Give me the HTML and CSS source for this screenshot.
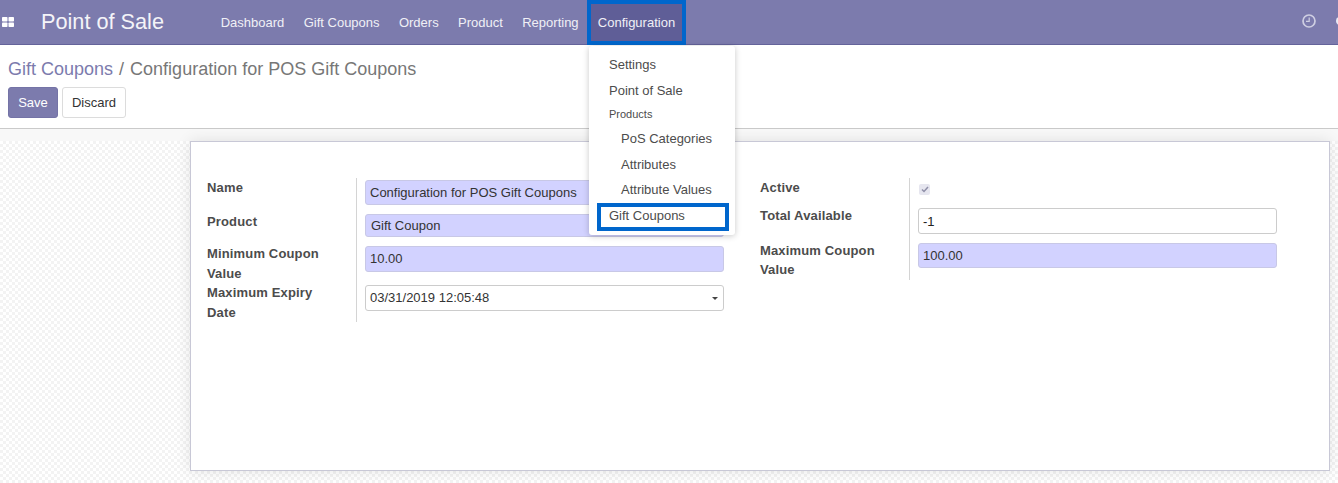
FILE: index.html
```html
<!DOCTYPE html>
<html lang="en">
<head>
    <meta charset="UTF-8">
    <meta name="viewport" content="width=device-width, initial-scale=1.0">
    <title>Point of Sale</title>
    <link rel="stylesheet" href="styles.css">
</head>
<body>

<nav class="navbar">
    <svg class="apps-icon" width="12" height="10" viewBox="0 0 12 10">
        <rect x="0" y="0" width="5.5" height="4.5" rx="0.8"/>
        <rect x="6.5" y="0" width="5.5" height="4.5" rx="0.8"/>
        <rect x="0" y="5.5" width="5.5" height="4.5" rx="0.8"/>
        <rect x="6.5" y="5.5" width="5.5" height="4.5" rx="0.8"/>
    </svg>
    <span class="brand">Point of Sale</span>
    <ul class="nav-menu">
        <li>Dashboard</li>
        <li>Gift Coupons</li>
        <li>Orders</li>
        <li>Product</li>
        <li>Reporting</li>
        <li class="nav-open">Configuration</li>
    </ul>
    <div class="nav-right">
        <svg class="clock-icon" width="14" height="14" viewBox="0 0 14 14">
            <circle cx="7" cy="7" r="6" fill="none" stroke="#cfcfe2" stroke-width="1.7"/>
            <path d="M7.2 3.4V7.4H4" fill="none" stroke="#cfcfe2" stroke-width="1.2"/>
        </svg>
        <span class="user-dot"></span>
    </div>
</nav>

<ul class="dropdown">
    <li>Settings</li>
    <li>Point of Sale</li>
    <li class="dropdown-head">Products</li>
    <li class="sub">PoS Categories</li>
    <li class="sub">Attributes</li>
    <li class="sub">Attribute Values</li>
    <li class="marked">Gift Coupons</li>
</ul>

<header class="control-panel">
    <h2 class="breadcrumb"><a>Gift Coupons</a> <span class="sep">/</span> Configuration for POS Gift Coupons</h2>
    <div class="buttons">
        <button class="btn-primary">Save</button>
        <button class="btn-default">Discard</button>
    </div>
</header>

<main class="content">
    <section class="sheet">
        <div class="group">
            <div class="row row-name">
                <label>Name</label>
                <div class="field"><div class="input required h25">Configuration for POS Gift Coupons</div></div>
            </div>
            <div class="row row-product">
                <label>Product</label>
                <div class="field"><div class="input required h23 pad-6">Gift Coupon</div></div>
            </div>
            <div class="row row-min">
                <label>Minimum Coupon Value</label>
                <div class="field"><div class="input required h26 lift">10.00</div></div>
            </div>
            <div class="row row-expiry">
                <label>Maximum Expiry Date</label>
                <div class="field">
                    <div class="input h26 lift">03/31/2019 12:05:48<span class="caret"></span></div>
                </div>
            </div>
        </div>
        <div class="group">
            <div class="row row-active">
                <label>Active</label>
                <div class="field"><span class="checkbox">
                    <svg width="8" height="7" viewBox="0 0 8 7"><path d="M1 3.5L3 5.5L7 1" fill="none" stroke="#8f8fa8" stroke-width="1.5"/></svg>
                </span></div>
            </div>
            <div class="row row-total">
                <label>Total Available</label>
                <div class="field"><div class="input h26 dark">-1</div></div>
            </div>
            <div class="row row-max">
                <label>Maximum Coupon Value</label>
                <div class="field"><div class="input required h25">100.00</div></div>
            </div>
        </div>
    </section>
</main>

</body>
</html>
```

FILE: styles.css
```css
* {
    margin: 0;
    padding: 0;
    box-sizing: border-box;
}
body {
    font-family: "Liberation Sans", Arial, sans-serif;
    font-size: 13px;
    color: #4c4c4c;
    height: 483px;
    overflow: hidden;
    background: #fff;
    position: relative;
}
ul {
    list-style: none;
}

/* top bar */
.navbar {
    height: 45px;
    background: #7c7bad;
    border-bottom: 1px solid #64639a;
    display: flex;
    align-items: center;
    color: #fff;
}
.apps-icon {
    fill: #fff;
    margin-left: 2px;
}
.brand {
    font-size: 21.7px;
    margin-left: 27px;
    width: 170px;
    color: #f4f4f8;
}
.nav-menu {
    display: flex;
    height: 44px;
}
.nav-menu li {
    padding: 0 9.7px;
    line-height: 46px;
    color: #f0f0f6;
}
.nav-menu .nav-open {
    background: #5f5e97;
    outline: 4px solid #0066cc;
    outline-offset: -4px;
    margin-left: -1px;
    padding: 0 10.5px;
    height: 45px;
}
.nav-right {
    margin-left: auto;
    display: flex;
    align-items: center;
    gap: 20px;
}
.clock-icon {
    margin-top: -2px;
}
.user-dot {
    width: 8px;
    height: 8px;
    border-radius: 50%;
    background: #e9e9f3;
    margin-right: -6px;
    margin-top: -3px;
}

/* configuration dropdown */
.dropdown {
    position: absolute;
    left: 589px;
    top: 46px;
    width: 146px;
    height: 189px;
    background: #fff;
    border-radius: 3px;
    box-shadow: 0 1px 6px rgba(0, 0, 0, 0.22);
    padding-top: 6px;
    z-index: 5;
}
.dropdown li {
    height: 26px;
    line-height: 25px;
    padding-left: 20px;
}
.dropdown .dropdown-head {
    font-size: 11px;
    height: 22px;
    line-height: 20px;
}
.dropdown .sub {
    padding-left: 32px;
    height: 25.5px;
}
.dropdown .marked {
    position: absolute;
    left: 8px;
    top: 157px;
    width: 132px;
    height: 28px;
    line-height: 18px;
    padding-left: 8px;
    border: 4px solid #0066cc;
}

/* title + buttons */
.control-panel {
    height: 84px;
    border-bottom: 1px solid #cacaca;
    padding: 12px 8px 0;
}
.breadcrumb {
    font-size: 18px;
    font-weight: 400;
    line-height: 24px;
    color: #777;
}
.breadcrumb a {
    color: #7c7bad;
}
.sep {
    padding: 0 1px;
}
.buttons {
    display: flex;
    gap: 4px;
    margin-top: 6px;
}
.buttons button {
    height: 31px;
    font: inherit;
    border-radius: 3px;
}
.btn-primary {
    width: 50px;
    background: #7c7bad;
    border: 1px solid #7473a6;
    color: #fff;
}
.btn-default {
    width: 64px;
    background: #fff;
    border: 1px solid #dcdcdc;
    color: #333;
}

/* form */
.content {
    height: 354px;
    padding: 12px 8px 0 190px;
    background-color: #fff;
    background-image: conic-gradient(#f3f3f3 25%, #fff 0 50%, #f3f3f3 0 75%, #fff 0);
    background-size: 6px 6px;
    position: relative;
}
.content::before {
    content: "";
    position: absolute;
    left: 0;
    right: 0;
    top: 0;
    height: 12px;
    background: #f8f8f8;
}
.sheet {
    position: relative;
    width: 1140px;
    height: 330px;
    background: #fff;
    border: 1px solid #c8c8d6;
    box-shadow: 0 0 14px rgba(0, 0, 0, 0.1);
    display: flex;
    padding: 36px 0 0 16px;
}
.group {
    width: 553px;
}
.row {
    display: flex;
}
.row label {
    width: 149px;
    font-weight: 700;
    line-height: 19.5px;
    padding-right: 24px;
    color: #4c4c4c;
    letter-spacing: 0.15px;
}
.field {
    width: 368px;
    border-left: 1px solid #d4d4d4;
    padding-left: 8px;
}
.input {
    width: 359px;
    border: 1px solid #ccc;
    border-radius: 3px;
    padding-left: 4px;
    color: #333;
    display: flex;
    align-items: center;
    background: #fff;
    position: relative;
}
.required {
    background: #d2d2ff;
    border-color: #c8c8e6;
}
.pad-6 {
    padding-left: 5px;
}
.lift {
    padding-bottom: 1px;
}
.dark {
    color: #222;
}
.h23 { height: 23px; }
.h25 { height: 25px; }
.h26 { height: 26px; }
.caret {
    position: absolute;
    right: 5px;
    top: 11px;
    border-top: 3px solid #444;
    border-left: 3px solid transparent;
    border-right: 3px solid transparent;
}
.checkbox {
    display: flex;
    align-items: center;
    justify-content: center;
    width: 11px;
    height: 11px;
    margin: 6px 0 0 1px;
    border-radius: 2px;
    background: #e6e6ef;
}

.row-name { height: 36px; }
.row-name .field { padding-top: 2px; }
.row-product { height: 30px; }
.row-product label { margin-top: -2px; }
.row-min { height: 39px; }
.row-min .field { padding-top: 2px; }
.row-expiry { height: 39px; }
.row-expiry .field { padding-top: 2px; }
.row-active { height: 30px; }
.row-total { height: 35px; }
.row-total label { margin-top: -2px; }
.row-max { height: 37px; }
.row-max label { margin-top: -2px; line-height: 19px; }
```
